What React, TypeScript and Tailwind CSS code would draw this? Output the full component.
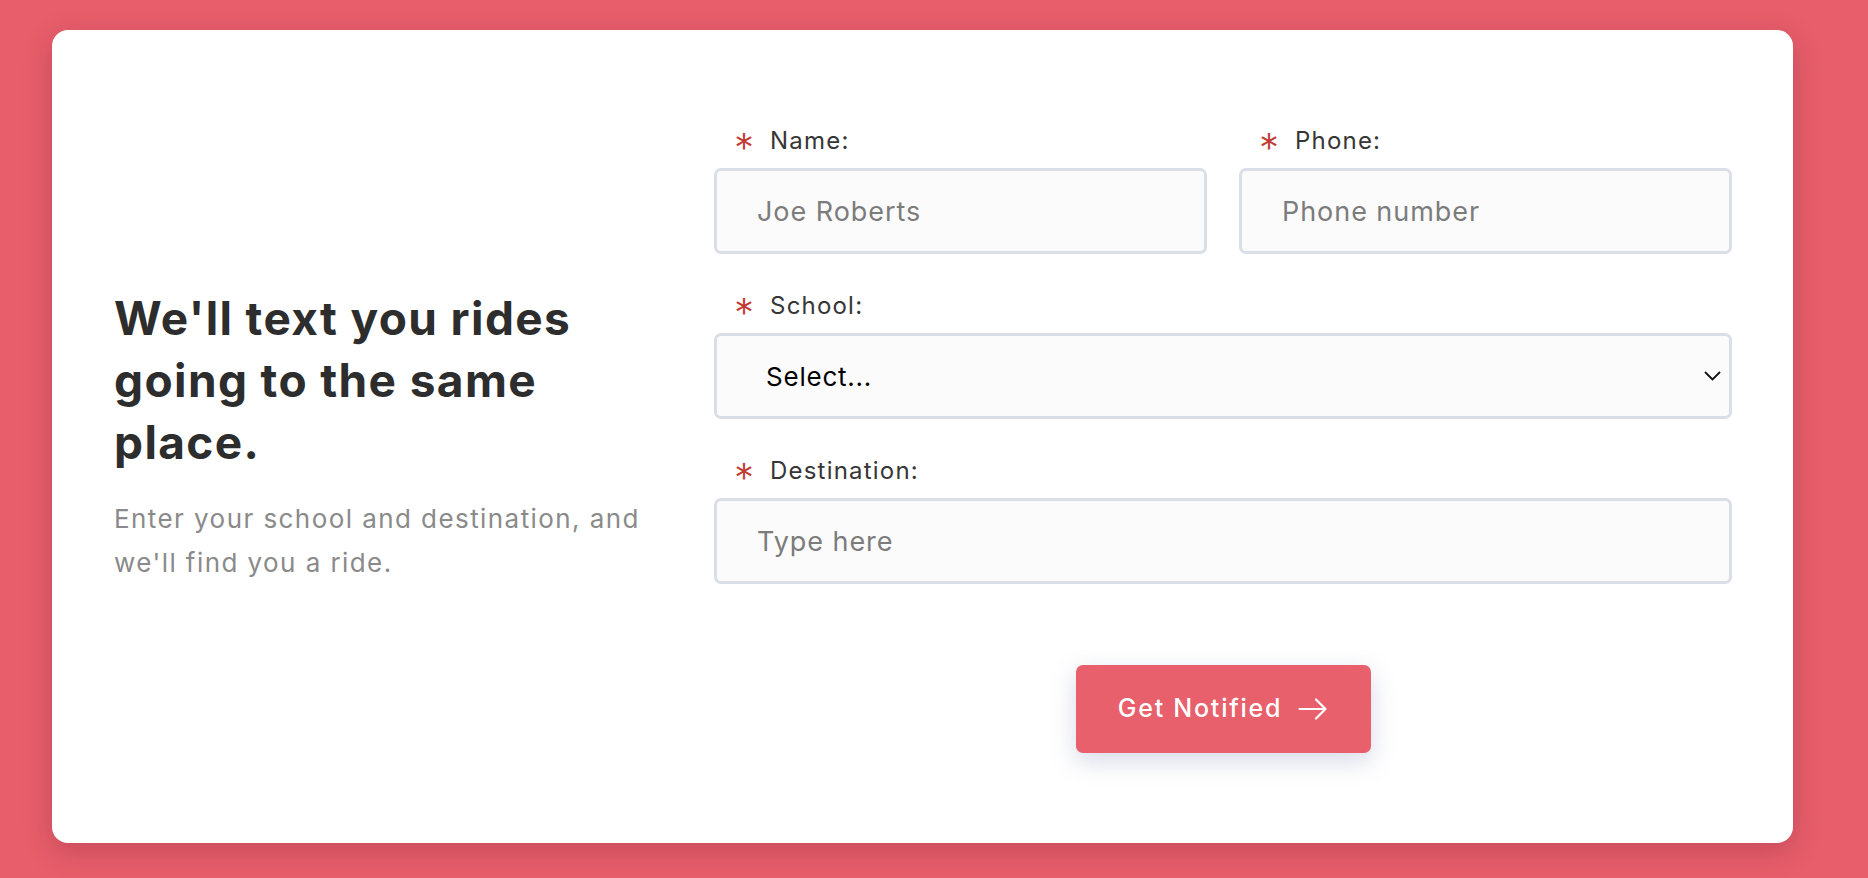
const font = { fontFamily: "Inter, 'Noto Sans', sans-serif" };

// Required-field label with the red asterisk
const Label = ({ text }: { text: string }) => (
  <label className="flex items-center h-[36px] pl-[20px] text-[24px] tracking-[0.05em] text-[#363636]">
    <span className="text-[40px] font-light leading-none text-[#c23b34] mr-[16px] mt-[14px] tracking-normal">*</span>
    {text}
  </label>
);

const inputCls =
  "w-full h-[86px] rounded-[7px] border-[3px] border-[#d9dee7] bg-[#fbfbfb] pl-[40px] text-[27px] tracking-[0.035em] text-[#333] placeholder-[#7c7c7c] outline-none";

export default function App() {
  return (
    <div className="min-h-screen bg-[#e85e6b] pt-[30px] pl-[52px] pr-[75px] pb-[35px]" style={font}>
      <div className="w-[1741px] bg-white rounded-[16px] shadow-[0_8px_28px_rgba(90,20,40,0.25)] pl-[62px] pr-[61px] pt-[93px] pb-[90px] flex items-center gap-[55px]">
        {/* Left intro text */}
        <div className="w-[545px] shrink-0 -mt-[4px]">
          <h1 className="text-[46px] leading-[62px] font-bold text-[#2d2d2d] tracking-[0.03em]">
            We'll text you rides going to the same place.
          </h1>
          <p className="mt-[24px] text-[26px] leading-[44px] text-[#8a8a8a] tracking-[0.055em]">
            Enter your school and destination, and we'll find you a ride.
          </p>
        </div>

        {/* Form */}
        <form className="w-[1018px] flex flex-col gap-[34px]" onSubmit={(e) => e.preventDefault()}>
          <div className="grid grid-cols-2 gap-[32px]">
            <div>
              <Label text="Name:" />
              <div className="mt-[9px]">
                <input className={inputCls} placeholder="Joe Roberts" />
              </div>
            </div>
            <div>
              <Label text="Phone:" />
              <div className="mt-[9px]">
                <input className={inputCls} placeholder="Phone number" />
              </div>
            </div>
          </div>

          <div>
            <Label text="School:" />
            <div className="mt-[9px] relative">
              <select
                className="w-full h-[86px] rounded-[7px] border-[3px] border-[#d9dee7] bg-[#fbfbfb] pl-[49px] text-[26px] tracking-[0.03em] text-black appearance-none outline-none"
                defaultValue=""
              >
                <option value="">Select...</option>
              </select>
              <svg
                className="absolute right-[11px] top-[38px] w-[17px] h-[10px] pointer-events-none"
                viewBox="0 0 17 10"
                fill="none"
                stroke="#111"
                strokeWidth={1.8}
              >
                <path d="M1 1l7.5 7.5L16 1" />
              </svg>
            </div>
          </div>

          <div>
            <Label text="Destination:" />
            <div className="mt-[9px]">
              <input className={inputCls} placeholder="Type here" />
            </div>
          </div>

          <div className="flex justify-center mt-[47px]">
            <button
              type="submit"
              className="w-[295px] h-[88px] rounded-[7px] bg-[#e8606c] text-white text-[25px] font-medium tracking-[0.07em] flex items-center justify-center gap-[16px] shadow-[0_8px_24px_rgba(110,120,170,0.28)]"
            >
              Get Notified
              <svg className="w-[30px] h-[22px]" viewBox="0 0 30 22" fill="none" stroke="currentColor" strokeWidth={2.2} strokeLinecap="round" strokeLinejoin="round">
                <path d="M1.5 11h26M18 1.5l9.5 9.5-9.5 9.5" />
              </svg>
            </button>
          </div>
        </form>
      </div>
    </div>
  );
}
